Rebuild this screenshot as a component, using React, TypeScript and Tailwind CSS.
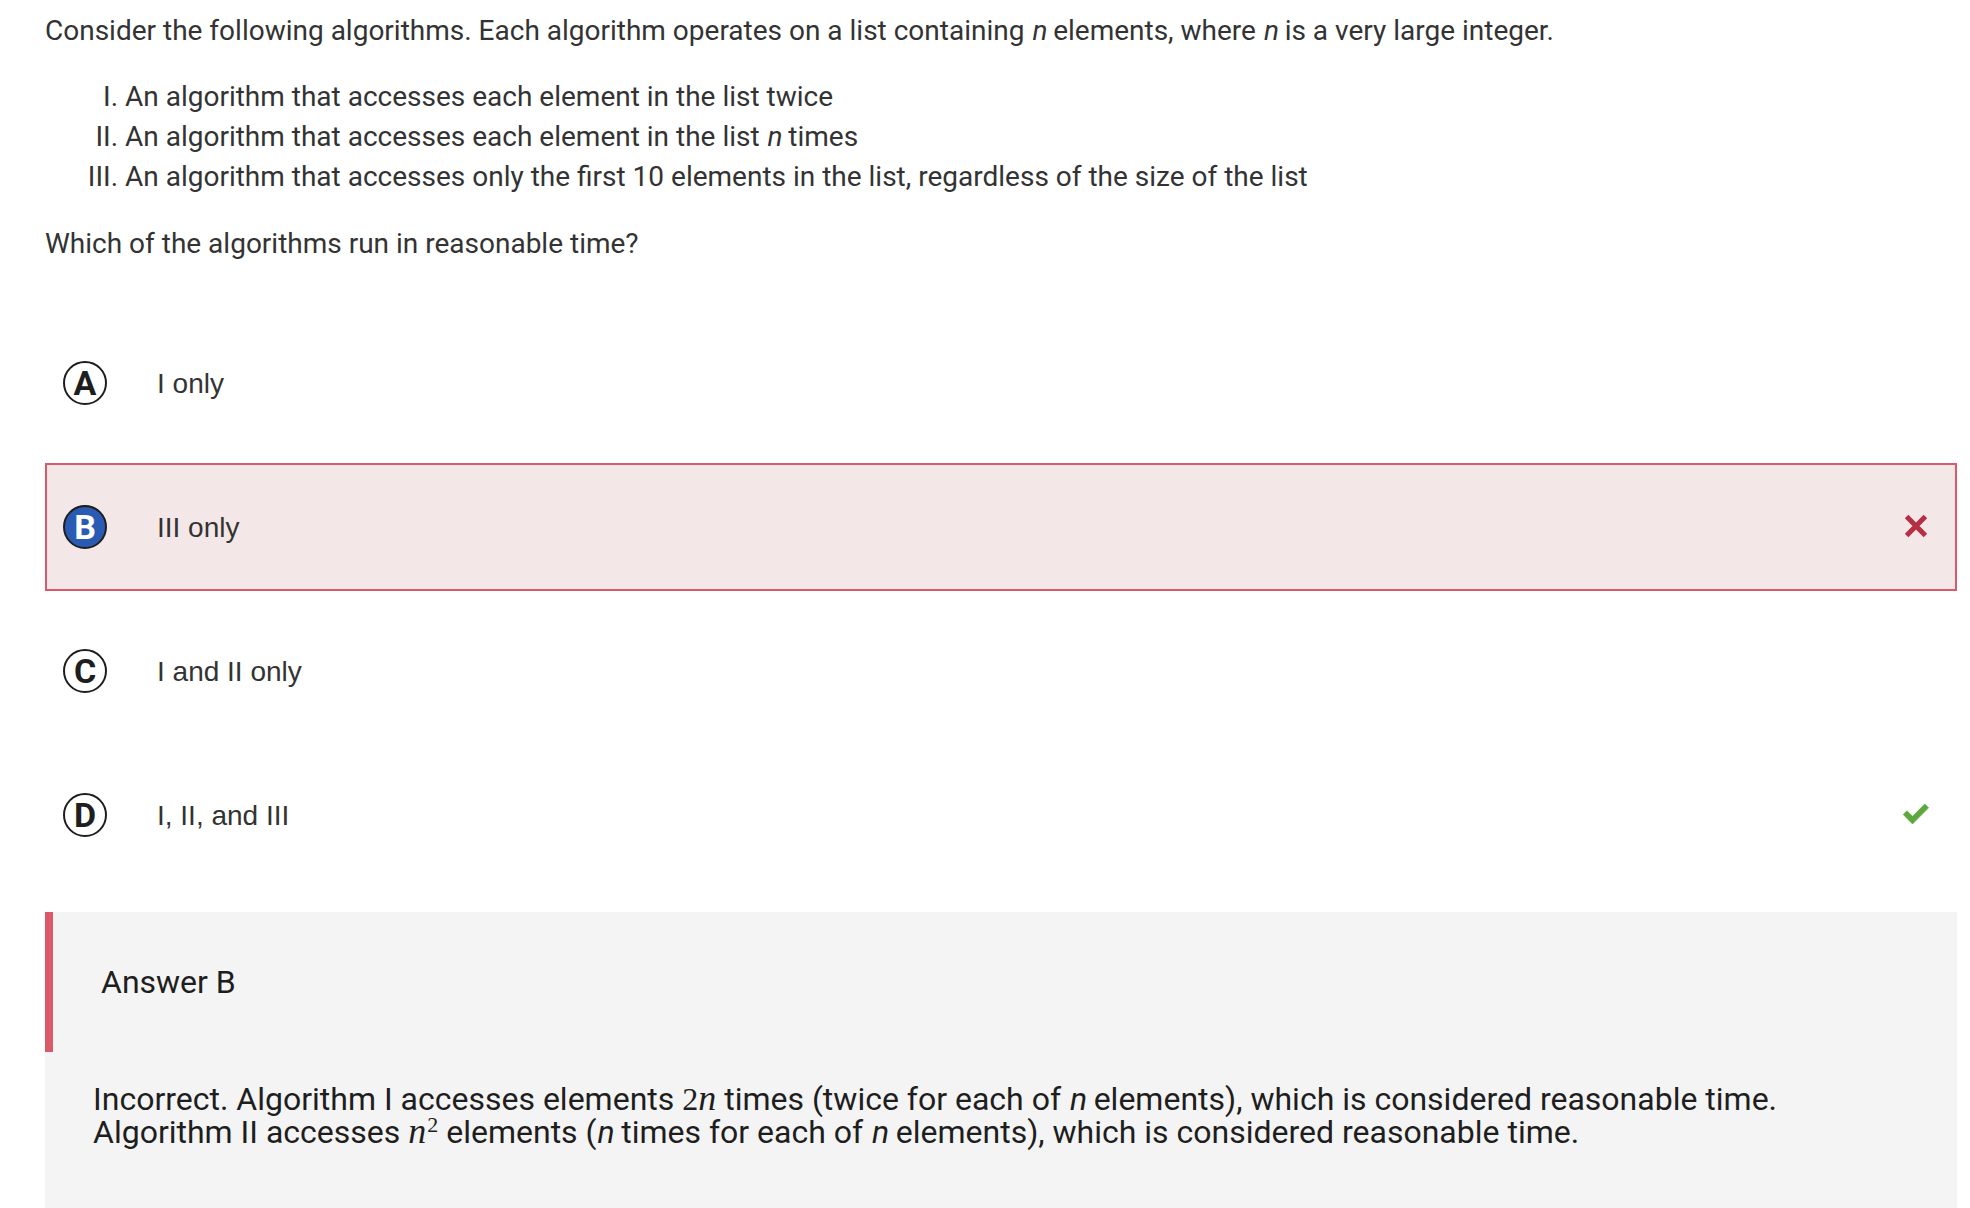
type Result = "correct" | "incorrect";

interface Choice {
  letter: string;
  text: string;
  selected?: boolean;
  result?: Result;
}

const choices: Choice[] = [
  { letter: "A", text: "I only" },
  { letter: "B", text: "III only", selected: true, result: "incorrect" },
  { letter: "C", text: "I and II only" },
  { letter: "D", text: "I, II, and III", result: "correct" },
];

/** The variable n, followed by a narrow space and the rest of the phrase. */
function Variable({ tail }: { tail: string }) {
  return (
    <>
      <i className="ml-px">n</i>
      {"\u2009"}
      {tail}
    </>
  );
}

function ResultIcon({ result }: { result: Result }) {
  return result === "incorrect" ? (
    <svg viewBox="0 0 28 28" role="img" aria-label="Incorrect" className="mb-0.5 size-7 text-[#b72d42]">
      <path
        d="M4.6 4.6 L23.4 23.4 M23.4 4.6 L4.6 23.4"
        stroke="currentColor"
        strokeWidth="5"
      />
    </svg>
  ) : (
    <svg viewBox="0 0 28 28" role="img" aria-label="Correct" className="mb-0.5 size-7 text-[#5da83c]">
      <path
        d="M1.2 14.5 L4.9 10.8 L10.5 16.3 L22.8 4 L26.6 7.8 L10.5 24 Z"
        fill="currentColor"
        stroke="currentColor"
        strokeWidth="0.6"
        strokeLinejoin="round"
      />
    </svg>
  );
}

function ChoiceRow({ choice }: { choice: Choice }) {
  return (
    <button
      type="button"
      role="radio"
      aria-checked={!!choice.selected}
      className={`flex h-32 w-full items-center border-2 pr-[25px] pl-4 text-left ${
        choice.result === "incorrect" ? "border-[#da5a6c] bg-[#f3e8e7]" : "border-transparent"
      }`}
    >
      <span
        className={`flex size-11 shrink-0 items-center justify-center rounded-full border-2 border-[#1e1e1e] text-[34px] leading-none font-bold ${
          choice.selected ? "bg-[#295bb5] text-white" : "bg-white text-[#1e1e1e]"
        }`}
      >
        {choice.letter}
      </span>
      <span className="ml-[50px] flex-1 pt-0.5 font-['Liberation_Sans',Arial,sans-serif] text-[28px] leading-10 text-[#333]">
        {choice.text}
      </span>
      {choice.result && <ResultIcon result={choice.result} />}
    </button>
  );
}

export default function App() {
  return (
    <main className="flex min-h-screen flex-col bg-white pt-[11px] pr-[13px] pl-[45px] font-[Roboto,sans-serif]">
      <section className="text-[28px] leading-10 text-[#333]">
        <p>
          Consider the following algorithms. Each algorithm operates on a list containing{" "}
          <Variable tail="elements, where " />
          <Variable tail="is a very large integer." />
        </p>
        <ol className="mt-[26px] mb-[27px] list-[upper-roman] pl-20">
          <li>An algorithm that accesses each element in the list twice</li>
          <li>
            An algorithm that accesses each element in the list <Variable tail="times" />
          </li>
          <li>
            An algorithm that accesses only the first 10 elements in the list, regardless of the
            size of the list
          </li>
        </ol>
        <p>Which of the algorithms run in reasonable time?</p>
      </section>

      <div role="radiogroup" aria-label="Answer choices" className="mt-[55px] flex flex-col gap-4">
        {choices.map((choice) => (
          <ChoiceRow key={choice.letter} choice={choice} />
        ))}
      </div>

      <section className="mt-[33px] flex-1 bg-[#f4f4f4] text-[32px] text-[#1e1e1e]">
        <h2 className="flex h-[140px] items-center border-l-8 border-[#da5a6c] pl-12">Answer B</h2>
        <p className="px-12 pt-[31px] pb-12 leading-[33px]">
          Incorrect. Algorithm I accesses elements{" "}
          <span className="font-['Liberation_Serif',serif]">
            2<i className="text-4xl leading-6">n</i>
          </span>{" "}
          times (twice for each of{" "}
          <Variable tail="elements), which is considered reasonable time." />
          <br />
          Algorithm II accesses{" "}
          <span className="font-['Liberation_Serif',serif]">
            <i className="mr-px text-4xl leading-6">n</i>
            <sup className="text-[22px] leading-none">2</sup>
          </span>{" "}
          elements (<Variable tail="times for each of " />
          <Variable tail="elements), which is considered reasonable time." />
        </p>
      </section>
    </main>
  );
}
